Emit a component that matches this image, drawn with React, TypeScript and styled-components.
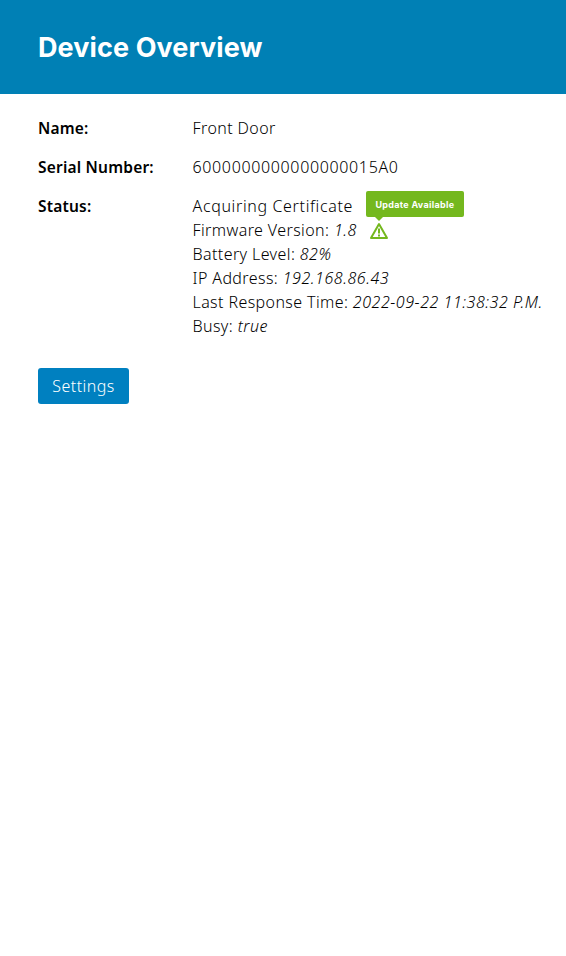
import React from "react";
import styled, { createGlobalStyle } from "styled-components";

const GlobalStyle = createGlobalStyle`
  html, body {
    margin: 0;
    padding: 0;
    background: #fff;
  }
  body {
    font-family: "Noto Sans", "Open Sans", sans-serif;
    color: #000;
  }
`;

const Header = styled.header`
  background: #0080b5;
  height: 94px;
  display: flex;
  align-items: center;
  padding: 0 38px;
`;

const Title = styled.h1`
  margin: 0;
  color: #fff;
  font-family: Inter, sans-serif;
  font-size: 27px;
  font-weight: 700;
  letter-spacing: 0.1px;
`;

const Content = styled.main`
  padding: 22px 0 0 38px;
`;

const Row = styled.div`
  display: flex;
  margin-bottom: 15px;
  line-height: 24px;
`;

const Label = styled.div`
  width: 154.5px;
  flex: none;
  font-weight: 600;
  font-size: 15.5px;
  letter-spacing: 0.2px;
`;

const Value = styled.div<{ $tracking?: number }>`
  white-space: nowrap;
  font-size: 16px;
  font-weight: 300;
  letter-spacing: ${(p) => p.$tracking ?? 0.4}px;
`;

const Line = styled.div<{ $tracking?: number }>`
  display: flex;
  align-items: center;
  height: 24px;
  white-space: pre;
  letter-spacing: ${(p) => p.$tracking ?? 0.4}px;
`;

const Em = styled.em`
  font-style: italic;
  letter-spacing: 0.55px;
`;

const WarningWrap = styled.span`
  position: relative;
  display: inline-flex;
  margin-left: 13px;
  top: 1px;
`;

const Tooltip = styled.span`
  position: absolute;
  left: -4px;
  bottom: 23px;
  width: 98px;
  height: 26px;
  display: flex;
  align-items: center;
  justify-content: center;
  background: #74b81e;
  border-radius: 2px;
  color: #fff;
  font-family: Inter, sans-serif;
  font-size: 9px;
  font-weight: 700;
  line-height: 1;
  letter-spacing: 0.3px;

  &::after {
    content: "";
    position: absolute;
    left: 9px;
    bottom: -4px;
    border-left: 4px solid transparent;
    border-right: 4px solid transparent;
    border-top: 4px solid #74b81e;
  }
`;

const Button = styled.button`
  display: block;
  width: 91px;
  height: 36px;
  margin-top: 30px;
  padding: 0;
  border: none;
  border-radius: 3px;
  background: #0080c0;
  color: #fff;
  font-family: "Noto Sans", sans-serif;
  font-size: 16px;
  font-weight: 300;
  letter-spacing: 0.45px;
`;

const WarningIcon = () => (
  <svg width="18" height="18" viewBox="0 0 18 18" fill="none" aria-hidden="true">
    <path
      d="M9 2 L17 16 H1 Z"
      stroke="#74b81e"
      strokeWidth="2"
      strokeLinejoin="round"
    />
    <path d="M9 6.5 V11.5" stroke="#74b81e" strokeWidth="2" />
    <path d="M9 12.6 V14.4" stroke="#74b81e" strokeWidth="2" />
  </svg>
);

const App = () => {
  return (
    <>
      <GlobalStyle />
      <Header>
        <Title>Device Overview</Title>
      </Header>
      <Content>
        <Row>
          <Label>Name:</Label>
          <Value>Front Door</Value>
        </Row>
        <Row>
          <Label>Serial Number:</Label>
          <Value $tracking={0.65}>6000000000000000015A0</Value>
        </Row>
        <Row>
          <Label>Status:</Label>
          <Value>
            <Line $tracking={0.65}>Acquiring Certificate</Line>
            <Line>
              Firmware Version: <Em>1.8</Em>
              <WarningWrap>
                <WarningIcon />
                <Tooltip>Update Available</Tooltip>
              </WarningWrap>
            </Line>
            <Line>
              Battery Level: <Em>82%</Em>
            </Line>
            <Line>
              IP Address: <Em>192.168.86.43</Em>
            </Line>
            <Line>
              Last Response Time: <Em>2022-09-22 11:38:32 P.M.</Em>
            </Line>
            <Line>
              Busy: <Em>true</Em>
            </Line>
          </Value>
        </Row>
        <Button>Settings</Button>
      </Content>
    </>
  );
};

export default App;
